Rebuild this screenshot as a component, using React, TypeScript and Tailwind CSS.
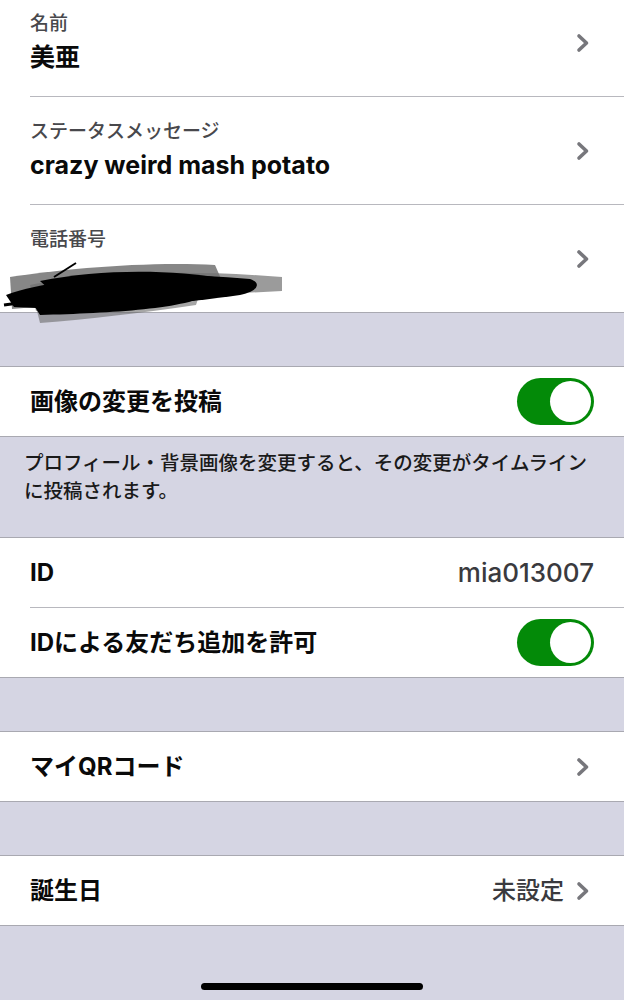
import React from 'react';

const font = { fontFamily: 'Inter, "Noto Sans CJK JP", "Noto Sans", sans-serif' };

function Chevron() {
  return (
    <svg width="14" height="20" viewBox="0 0 14 20" className="shrink-0">
      <path d="M3 3 L10.5 10 L3 17" fill="none" stroke="#77777c" strokeWidth="3.6" strokeLinecap="round" strokeLinejoin="round" />
    </svg>
  );
}

function Toggle() {
  return (
    <div className="w-[77px] h-[47px] rounded-full bg-[#038a08] flex items-center justify-end pr-[3px]">
      <div className="w-[41px] h-[41px] rounded-full bg-white" />
    </div>
  );
}

function Scribble() {
  return (
    <svg width="290" height="90" viewBox="0 0 290 90" className="absolute left-0 top-0">
      <path d="M10 30 C60 22 150 14 215 18 L222 34 C170 48 90 56 12 62 Z" fill="#5f5f5f" opacity="0.75" />
      <path d="M30 38 C90 26 180 22 282 30 L282 44 C200 48 120 54 36 64 Z" fill="#707070" opacity="0.7" />
      <path d="M36 60 C80 54 140 48 200 46 L196 58 C140 66 90 72 40 76 Z" fill="#6a6a6a" opacity="0.6" />
      <path d="M6 48 C50 32 140 22 250 32 C262 36 258 44 240 48 C170 58 80 64 14 60 Z" fill="#000" />
      <path d="M40 34 C100 22 170 22 226 32 C214 44 150 50 60 52 Z" fill="#000" />
      <path d="M30 52 C80 46 150 44 210 46 C190 62 110 66 40 68 Z" fill="#000" />
      <path d="M54 30 L76 16" stroke="#000" strokeWidth="2" />
      <path d="M4 58 C60 50 120 46 200 46" stroke="#000" strokeWidth="3" fill="none" />
    </svg>
  );
}

function TwoLineRow({ label, value, last }: { label: string; value?: string; last?: boolean }) {
  return (
    <div className="bg-white">
      <div className="h-[107px] flex items-center pl-[30px] pr-[34px]">
        <div className="flex-1">
          <div className="text-[19px] font-medium text-[#48484c] leading-[24px]">{label}</div>
          <div className="mt-[5px] text-[25px] font-bold text-[#0a0a0a] leading-[32px] h-[32px]">{value}</div>
        </div>
        <Chevron />
      </div>
      {!last && <div className="ml-[30px] h-px bg-[#b8b8be]" />}
    </div>
  );
}

function Row({ label, right, sep }: { label: string; right: React.ReactNode; sep?: boolean }) {
  return (
    <div className="bg-white">
      <div className="h-[69px] flex items-center pl-[30px] pr-[30px]">
        <div className="flex-1 text-[24px] font-bold text-[#0a0a0a]">{label}</div>
        {right}
      </div>
      {sep && <div className="ml-[30px] h-px bg-[#b8b8be]" />}
    </div>
  );
}

function Gap() {
  return <div className="h-[55px] border-y border-[#a9a9b1] bg-[#d5d5e3]" />;
}

export default function App() {
  return (
    <div style={font} className="w-[624px] h-[1000px] bg-[#d5d5e3] overflow-hidden flex flex-col">
      <div className="mt-[-11px]">
        <TwoLineRow label="名前" value="美亜" />
        <TwoLineRow label="ステータスメッセージ" value="crazy weird mash potato" />
        <div className="relative">
          <TwoLineRow label="電話番号" last />
          <div className="absolute left-0 top-[42px]">
            <Scribble />
          </div>
        </div>
      </div>
      <Gap />
      <Row label="画像の変更を投稿" right={<Toggle />} />
      <div className="border-t border-[#a9a9b1] pl-[24px] pr-[16px] pt-[12px] h-[101px] text-[19.5px] font-medium text-[#1a1a1a] leading-[28px]">
        プロフィール・背景画像を変更すると、その変更がタイムライン<br />に投稿されます。
      </div>
      <div className="border-t border-[#a9a9b1]">
        <Row label="ID" right={<span className="text-[26px] text-[#3a3a3e] font-medium">mia013007</span>} sep />
        <Row label="IDによる友だち追加を許可" right={<Toggle />} />
      </div>
      <Gap />
      <Row label="マイQRコード" right={<div className="pr-[4px]"><Chevron /></div>} />
      <Gap />
      <Row
        label="誕生日"
        right={
          <div className="flex items-center gap-[12px] pr-[4px]">
            <span className="text-[24px] font-medium text-[#3a3a3e]">未設定</span>
            <Chevron />
          </div>
        }
      />
      <div className="flex-1 border-t border-[#a9a9b1] flex items-end justify-center pb-[10px]">
        <div className="w-[222px] h-[7px] rounded-full bg-black" />
      </div>
    </div>
  );
}
